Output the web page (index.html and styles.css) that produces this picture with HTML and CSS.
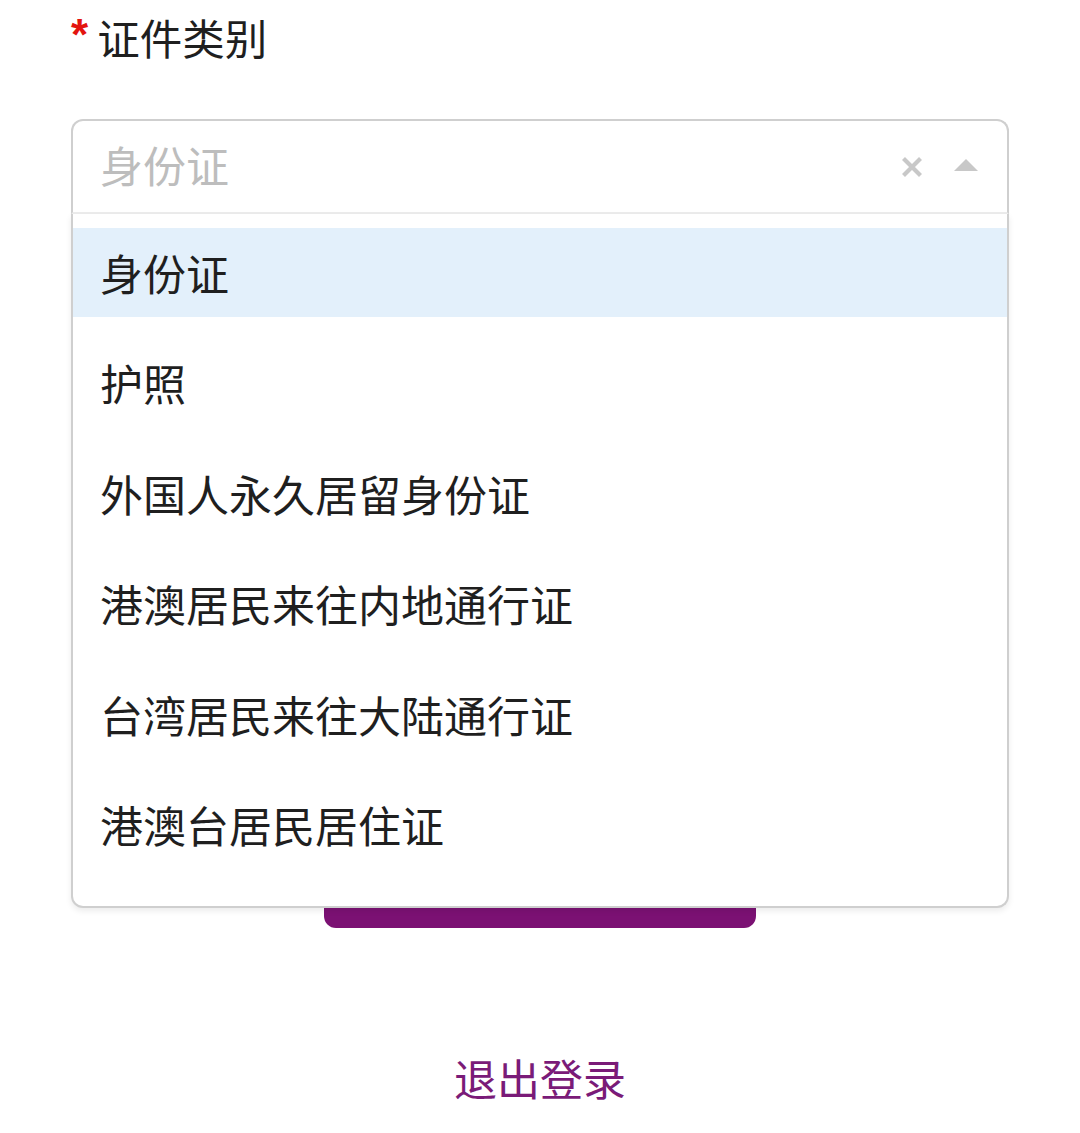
FILE: index.html
```html
<!DOCTYPE html>
<html lang="zh-CN">
<head>
<meta charset="utf-8">
<title>证件类别</title>
<link rel="stylesheet" href="styles.css">
</head>
<body>
<div class="page">
  <div class="field-label"><span class="req">*</span><span class="label-text">证件类别</span></div>
  <div class="select">
    <div class="control">
      <span class="placeholder">身份证</span>
      <span class="actions">
        <svg class="clear" width="22" height="22" viewBox="0 0 22 22"><path d="M2.5 2.5 L19.5 19.5 M19.5 2.5 L2.5 19.5" stroke="#c8c8c8" stroke-width="4.2" stroke-linecap="butt"/></svg>
        <svg class="caret" width="26" height="14" viewBox="0 0 26 14"><path d="M13 1 L25 13 L1 13 Z" fill="#c8c8c8"/></svg>
      </span>
    </div>
    <ul class="menu">
      <li class="option active">身份证</li>
      <li class="option">护照</li>
      <li class="option">外国人永久居留身份证</li>
      <li class="option">港澳居民来往内地通行证</li>
      <li class="option">台湾居民来往大陆通行证</li>
      <li class="option">港澳台居民居住证</li>
    </ul>
  </div>
  <div class="btn-row"><button class="submit">提交</button></div>
  <div class="logout">退出登录</div>
</div>
</body>
</html>
```

FILE: styles.css
```css
html, body {
  margin: 0;
  padding: 0;
  background: #ffffff;
}
body {
  font-family: "Noto Sans CJK SC", "Noto Sans", sans-serif;
  color: #1f1f1f;
}
.page {
  padding: 7px 71px 0 71px;
}
.field-label {
  display: flex;
  align-items: flex-start;
  height: 63px;
  line-height: 60px;
  font-size: 42.5px;
}
.req {
  font-family: "Liberation Sans", sans-serif;
  font-weight: bold;
  color: #e3140f;
  font-size: 44px;
  line-height: 56px;
  margin-left: 0;
  margin-right: 9px;
}
.label-text {
  color: #1f1f1f;
}
.select {
  position: relative;
  margin-top: 49px;
  z-index: 2;
}
.control {
  box-sizing: border-box;
  height: 95px;
  border: 2px solid #cfcfcf;
  border-bottom: 2px solid #ececec;
  border-radius: 12px 12px 0 0;
  display: flex;
  align-items: center;
  justify-content: space-between;
  padding: 0 28px 0 27px;
  background: #fff;
}
.placeholder {
  font-size: 43px;
  color: #bdbdbd;
  line-height: 60px;
  margin-top: -6px;
}
.actions {
  display: flex;
  align-items: center;
  gap: 30px;
  margin-top: 0;
}
.clear { display: block; }
.caret { display: block; margin-top: -3px; }
.menu {
  position: absolute;
  left: 0;
  right: 0;
  top: 100%;
  margin: 0;
  padding: 14px 0 37px 0;
  list-style: none;
  box-sizing: border-box;
  background: #fff;
  border: 2px solid #cfcfcf;
  border-top: none;
  border-radius: 0 0 12px 12px;
  box-shadow: 0 3px 6px rgba(0,0,0,0.08);
  display: flex;
  flex-direction: column;
  gap: 21.4px;
}
.option {
  height: 89px;
  line-height: 88px;
  padding-left: 27px;
  font-size: 43px;
  color: #1f1f1f;
}
.option.active {
  background: #e3f0fb;
}
.btn-row {
  display: flex;
  justify-content: center;
  margin-top: 626px;
}
.submit {
  width: 432px;
  height: 88px;
  border: none;
  border-radius: 12px;
  background: #7b1173;
  color: #fff;
  font-family: "Noto Sans CJK SC", sans-serif;
  font-size: 40px;
  padding: 0;
}
.logout {
  margin-top: 119px;
  text-align: center;
  font-size: 43px;
  line-height: 60px;
  color: #7a1b78;
}
```
